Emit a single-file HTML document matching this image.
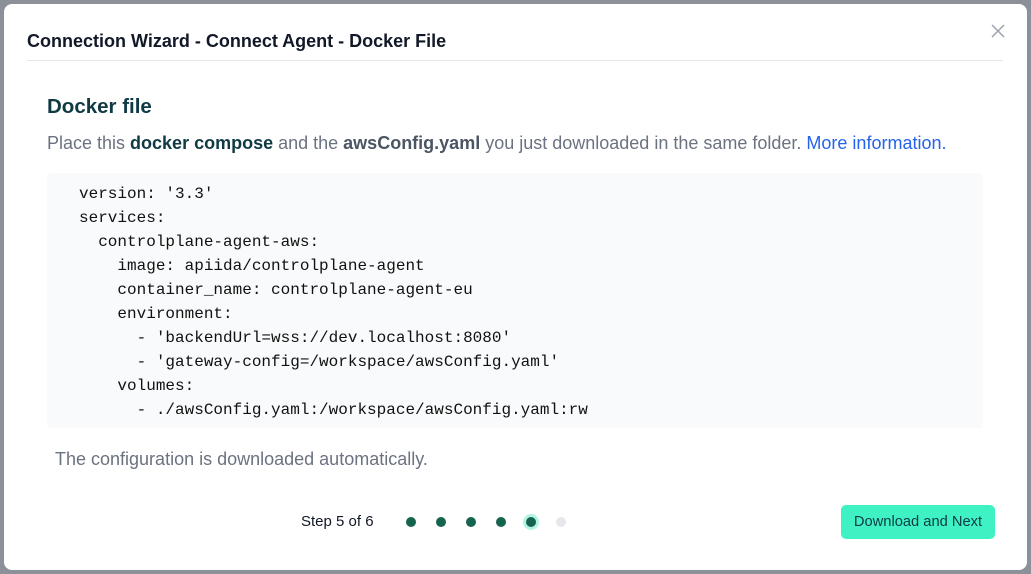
<!DOCTYPE html><html><head><style>
body{margin:0;width:1031px;height:574px;background:#8b9099;font-family:"Liberation Sans",sans-serif;overflow:hidden;position:relative}
.m{position:absolute;left:4px;top:4px;width:1023px;height:566px;background:#fff;border-radius:8px}
.t{position:absolute;left:23px;top:27px;font-size:18px;font-weight:bold;color:#111827}
.hr{position:absolute;left:23px;top:56px;width:976px;height:1px;background:#e5e7eb}
.x{position:absolute;left:987px;top:20px;width:14px;height:14px}
h2{position:absolute;left:43px;top:91px;margin:0;font-size:20.5px;color:#0f3a44}
.p{position:absolute;left:43px;top:129px;font-size:18px;color:#6b7280}
.p b{color:#0f3a44}.p b.g{color:#4b5563}.p a{color:#2563eb}
pre{position:absolute;left:43px;top:169px;width:936px;height:255px;margin:0;background:#f9fafb;border-radius:4px;font-family:"Liberation Mono",monospace;font-size:16px;line-height:24px;color:#111;padding:9px 0 0 32px;box-sizing:border-box}
.c{position:absolute;left:51px;top:445px;font-size:18px;color:#6b7280}
.s{position:absolute;left:297px;top:509px;font-size:15px;color:#111827}
.d{position:absolute;top:513px;width:10px;height:10px;border-radius:50%;background:#16634f}
.b{position:absolute;left:837px;top:501px;width:154px;height:34px;background:#3ef2c4;border-radius:5px;font-size:14.7px;color:#0f3a44;text-align:center;line-height:34px}
</style></head><body><div class="m">
<div class="t">Connection Wizard - Connect Agent - Docker File</div>
<svg class="x" viewBox="0 0 14 14"><path d="M1 1L13 13M13 1L1 13" stroke="#9ca3af" stroke-width="1.5"/></svg>
<div class="hr"></div>
<h2>Docker file</h2>
<div class="p">Place this <b>docker compose</b> and the <b class="g">awsConfig.yaml</b> you just downloaded in the same folder. <a>More information.</a></div>
<pre>version: '3.3'
services:
  controlplane-agent-aws:
    image: apiida/controlplane-agent
    container_name: controlplane-agent-eu
    environment:
      - 'backendUrl=wss://dev.localhost:8080'
      - 'gateway-config=/workspace/awsConfig.yaml'
    volumes:
      - ./awsConfig.yaml:/workspace/awsConfig.yaml:rw</pre>
<div class="c">The configuration is downloaded automatically.</div>
<div class="s">Step 5 of 6</div>
<div class="d" style="left:402px"></div><div class="d" style="left:432px"></div><div class="d" style="left:462px"></div><div class="d" style="left:492px"></div>
<div class="d" style="left:522px;box-shadow:0 0 0 3px #b2f5e3"></div>
<div class="d" style="left:552px;background:#e5e7eb"></div>
<div class="b">Download and Next</div>
</div></body></html>
